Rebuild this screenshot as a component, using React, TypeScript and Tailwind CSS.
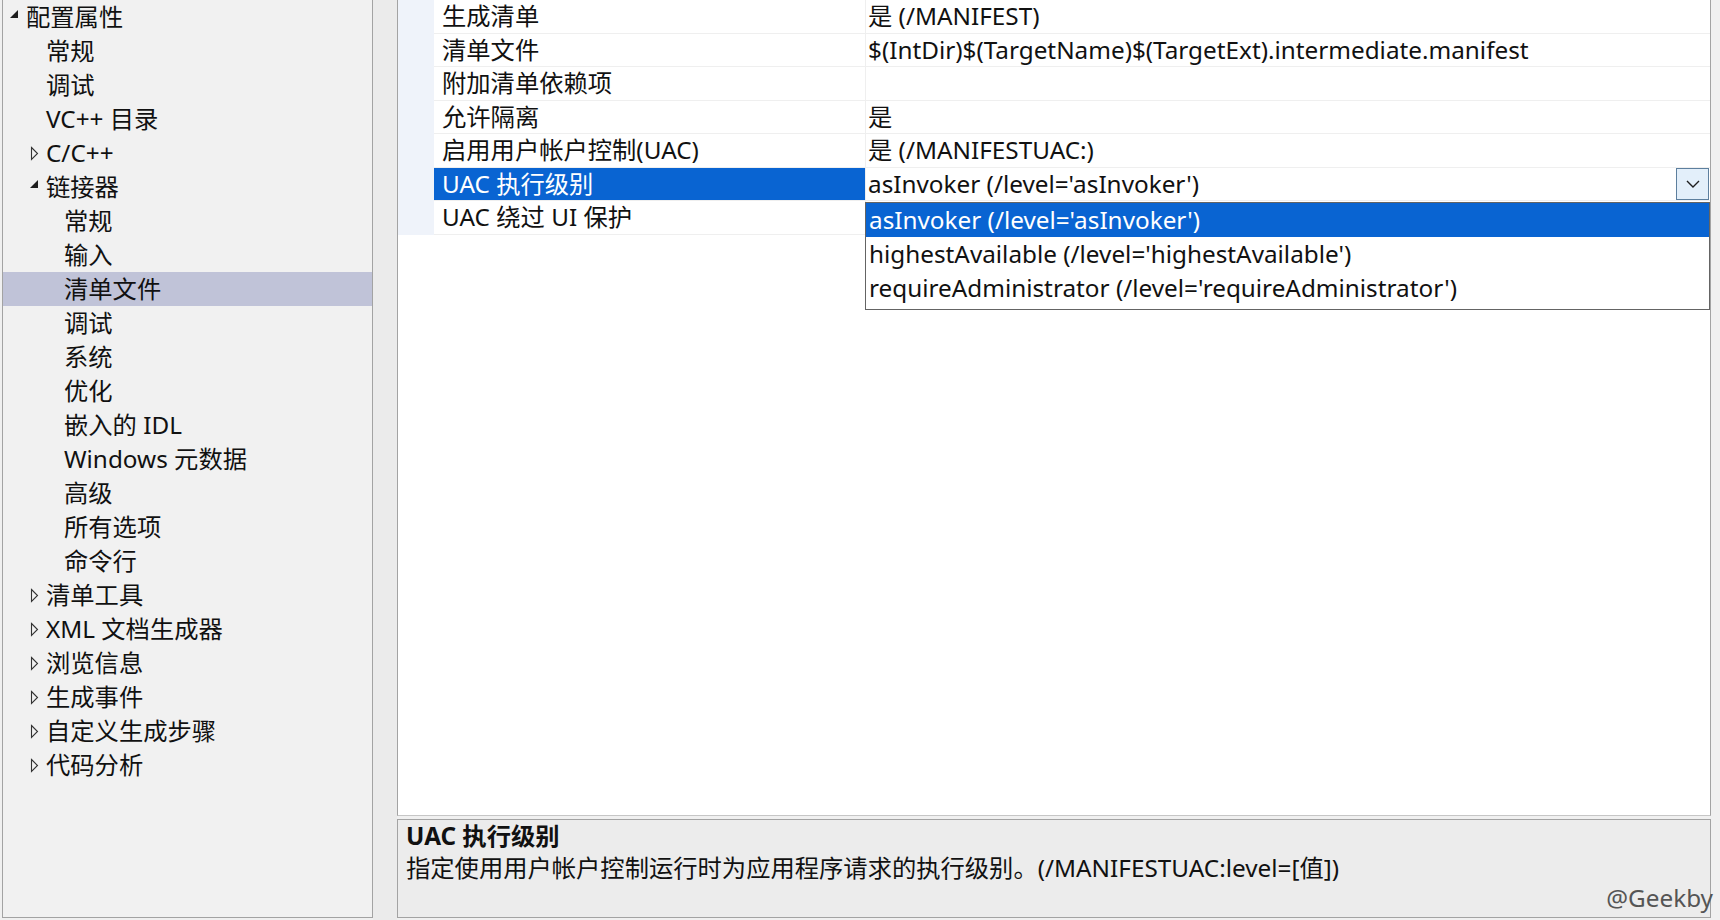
import clsx from 'clsx';

type TreeItem = {
  label: string;
  level: 0 | 1 | 2;
  toggle?: 'open' | 'closed';
  selected?: boolean;
};

const treeItems: TreeItem[] = [
  { label: '配置属性', level: 0, toggle: 'open' },
  { label: '常规', level: 1 },
  { label: '调试', level: 1 },
  { label: 'VC++ 目录', level: 1 },
  { label: 'C/C++', level: 1, toggle: 'closed' },
  { label: '链接器', level: 1, toggle: 'open' },
  { label: '常规', level: 2 },
  { label: '输入', level: 2 },
  { label: '清单文件', level: 2, selected: true },
  { label: '调试', level: 2 },
  { label: '系统', level: 2 },
  { label: '优化', level: 2 },
  { label: '嵌入的 IDL', level: 2 },
  { label: 'Windows 元数据', level: 2 },
  { label: '高级', level: 2 },
  { label: '所有选项', level: 2 },
  { label: '命令行', level: 2 },
  { label: '清单工具', level: 1, toggle: 'closed' },
  { label: 'XML 文档生成器', level: 1, toggle: 'closed' },
  { label: '浏览信息', level: 1, toggle: 'closed' },
  { label: '生成事件', level: 1, toggle: 'closed' },
  { label: '自定义生成步骤', level: 1, toggle: 'closed' },
  { label: '代码分析', level: 1, toggle: 'closed' },
];

const indent = {
  0: 'pl-[6px]',
  1: 'pl-[26px]',
  2: 'pl-[44px]',
};

const properties: { name: string; value: string; selected?: boolean }[] = [
  { name: '生成清单', value: '是 (/MANIFEST)' },
  { name: '清单文件', value: '$(IntDir)$(TargetName)$(TargetExt).intermediate.manifest' },
  { name: '附加清单依赖项', value: '' },
  { name: '允许隔离', value: '是' },
  { name: '启用用户帐户控制(UAC)', value: '是 (/MANIFESTUAC:)' },
  { name: 'UAC 执行级别', value: "asInvoker (/level='asInvoker')", selected: true },
  { name: 'UAC 绕过 UI 保护', value: '' },
];

const options = [
  "asInvoker (/level='asInvoker')",
  "highestAvailable (/level='highestAvailable')",
  "requireAdministrator (/level='requireAdministrator')",
];

const Toggle = ({ kind }: { kind?: 'open' | 'closed' }) => {
  if (kind === 'open')
    return (
      <svg width="10" height="10" viewBox="0 0 10 10" className="mt-[-6px]">
        <polygon points="9,1 9,9 1,9" fill="#1e1e1e" />
      </svg>
    );
  if (kind === 'closed')
    return (
      <svg width="9" height="15" viewBox="0 0 9 15" className="ml-[1px]">
        <polygon points="1.5,1.5 7.5,7.5 1.5,13.5" fill="none" stroke="#333" strokeWidth="1.1" />
      </svg>
    );
  return null;
};

const ConfigTree = () => (
  <aside className="flex h-[918px] w-[371px] flex-col border-x border-b border-[#a3a3a3] bg-[#f1f1f1]">
    {treeItems.map((item, i) => (
      <div
        key={i}
        className={clsx('flex h-[34px] shrink-0 items-center', indent[item.level], item.selected && 'bg-[#c0c3d8]')}
      >
        <div className="flex w-[17px] items-center">
          <Toggle kind={item.toggle} />
        </div>
        <span className="whitespace-pre leading-[28px]">{item.label}</span>
      </div>
    ))}
  </aside>
);

const PropertyGrid = () => (
  <div className="relative h-[816px] border-x border-b border-x-[#a3a3a3] border-b-[#c6c6c6] bg-white">
    <div className="flex">
      <div className="w-[36px] bg-[#eff3fa]" />
      <div className="flex-1">
        {properties.map((p) => (
          <div key={p.name} className="flex h-[33.5px] border-b border-[#efefef]">
            <div
              className={clsx(
                'flex w-[432px] items-center border-r border-[#efefef] pl-[8px]',
                p.selected && 'bg-[#0964d2] text-white',
              )}
            >
              <span className="whitespace-pre leading-[28px]">{p.name}</span>
            </div>
            <div className="flex flex-1 items-center pl-[2px]">
              <span className="flex-1 whitespace-pre leading-[28px]">{p.value}</span>
              {p.selected && (
                <div className="mr-[1px] flex h-[32px] w-[33px] items-center justify-center border border-[#5d7f9e] bg-[#e3effa]">
                  <svg width="14" height="8" viewBox="0 0 14 8">
                    <polyline points="1,1 7,7 13,1" fill="none" stroke="#1e1e1e" strokeWidth="1.4" />
                  </svg>
                </div>
              )}
            </div>
          </div>
        ))}
      </div>
    </div>

    {/* open combobox list */}
    <div className="absolute left-[467px] top-[202px] flex h-[108px] w-[845px] flex-col border border-[#646464] bg-white">
      {options.map((o, i) => (
        <div
          key={o}
          className={clsx('flex h-[34px] items-center pl-[3px]', i === 0 && 'bg-[#0964d2] text-white')}
        >
          <span className="whitespace-pre">{o}</span>
        </div>
      ))}
    </div>
  </div>
);

const Description = () => (
  <div className="flex h-[99px] flex-col border border-[#a3a3a3] bg-[#ececec] pl-[8px]">
    <div className="font-bold leading-[32px]">UAC 执行级别</div>
    <div className="leading-[32px]">指定使用用户帐户控制运行时为应用程序请求的执行级别。(/MANIFESTUAC:level=[值])</div>
    <div className="mr-[-3px] text-right leading-[28px] text-[#555]">@Geekby</div>
  </div>
);

export default function App() {
  return (
    <div className="flex h-[920px] w-[1720px] overflow-hidden bg-[#f0f0f0] font-['Noto_Sans','Noto_Sans_CJK_SC',sans-serif] text-[24.3px] text-[#111]">
      <div className="w-[2px]" />
      <ConfigTree />
      <div className="w-[24px] bg-[#ebebeb]" />
      <div className="flex w-[1314px] flex-col">
        <PropertyGrid />
        <div className="h-[3px]" />
        <Description />
      </div>
    </div>
  );
}
